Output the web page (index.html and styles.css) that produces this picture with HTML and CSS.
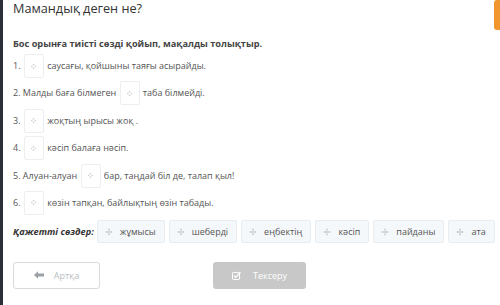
FILE: index.html
```html
<!DOCTYPE html>
<html>
<head>
<meta charset="utf-8">
<link rel="stylesheet" href="styles.css">
</head>
<body>
<div class="page">
  <div class="accent"></div>
  <h1 class="title">Мамандық деген не?</h1>
  <p class="instr">Бос орынға тиісті сөзді қойып, мақалды толықтыр.</p>
  <div class="rows">
    <div class="row">1. <span class="slot"><svg viewBox="0 0 10 10"><path d="M5 1 L6.6 3.2 H3.4 Z M5 9 L6.6 6.8 H3.4 Z M1 5 L3.2 3.4 V6.6 Z M9 5 L6.8 3.4 V6.6 Z"/></svg></span> саусағы, қойшыны таяғы асырайды.</div>
    <div class="row">2. Малды бағa білмеген <span class="slot"><svg viewBox="0 0 10 10"><path d="M5 1 L6.6 3.2 H3.4 Z M5 9 L6.6 6.8 H3.4 Z M1 5 L3.2 3.4 V6.6 Z M9 5 L6.8 3.4 V6.6 Z"/></svg></span> таба білмейді.</div>
    <div class="row">3. <span class="slot"><svg viewBox="0 0 10 10"><path d="M5 1 L6.6 3.2 H3.4 Z M5 9 L6.6 6.8 H3.4 Z M1 5 L3.2 3.4 V6.6 Z M9 5 L6.8 3.4 V6.6 Z"/></svg></span> жоқтың ырысы жоқ .</div>
    <div class="row">4. <span class="slot"><svg viewBox="0 0 10 10"><path d="M5 1 L6.6 3.2 H3.4 Z M5 9 L6.6 6.8 H3.4 Z M1 5 L3.2 3.4 V6.6 Z M9 5 L6.8 3.4 V6.6 Z"/></svg></span> кәсіп балаға нәсіп.</div>
    <div class="row">5. Алуан-алуан <span class="slot"><svg viewBox="0 0 10 10"><path d="M5 1 L6.6 3.2 H3.4 Z M5 9 L6.6 6.8 H3.4 Z M1 5 L3.2 3.4 V6.6 Z M9 5 L6.8 3.4 V6.6 Z"/></svg></span> бар, таңдай біл де, талап қыл!</div>
    <div class="row">6. <span class="slot"><svg viewBox="0 0 10 10"><path d="M5 1 L6.6 3.2 H3.4 Z M5 9 L6.6 6.8 H3.4 Z M1 5 L3.2 3.4 V6.6 Z M9 5 L6.8 3.4 V6.6 Z"/></svg></span> көзін тапқан, байлықтың өзін табады.</div>
  </div>
  <div class="words">
    <span class="label">Қажетті сөздер:</span>
    <span class="chip"><svg class="move" viewBox="0 0 10 10"><path d="M5 0.5 L6.5 2.3 H5.5 V4.5 H7.7 V3.5 L9.5 5 L7.7 6.5 V5.5 H5.5 V7.7 H6.5 L5 9.5 L3.5 7.7 H4.5 V5.5 H2.3 V6.5 L0.5 5 L2.3 3.5 V4.5 H4.5 V2.3 H3.5 Z"/></svg>жұмысы</span>
    <span class="chip"><svg class="move" viewBox="0 0 10 10"><path d="M5 0.5 L6.5 2.3 H5.5 V4.5 H7.7 V3.5 L9.5 5 L7.7 6.5 V5.5 H5.5 V7.7 H6.5 L5 9.5 L3.5 7.7 H4.5 V5.5 H2.3 V6.5 L0.5 5 L2.3 3.5 V4.5 H4.5 V2.3 H3.5 Z"/></svg>шеберді</span>
    <span class="chip"><svg class="move" viewBox="0 0 10 10"><path d="M5 0.5 L6.5 2.3 H5.5 V4.5 H7.7 V3.5 L9.5 5 L7.7 6.5 V5.5 H5.5 V7.7 H6.5 L5 9.5 L3.5 7.7 H4.5 V5.5 H2.3 V6.5 L0.5 5 L2.3 3.5 V4.5 H4.5 V2.3 H3.5 Z"/></svg>еңбектің</span>
    <span class="chip"><svg class="move" viewBox="0 0 10 10"><path d="M5 0.5 L6.5 2.3 H5.5 V4.5 H7.7 V3.5 L9.5 5 L7.7 6.5 V5.5 H5.5 V7.7 H6.5 L5 9.5 L3.5 7.7 H4.5 V5.5 H2.3 V6.5 L0.5 5 L2.3 3.5 V4.5 H4.5 V2.3 H3.5 Z"/></svg>кәсіп</span>
    <span class="chip"><svg class="move" viewBox="0 0 10 10"><path d="M5 0.5 L6.5 2.3 H5.5 V4.5 H7.7 V3.5 L9.5 5 L7.7 6.5 V5.5 H5.5 V7.7 H6.5 L5 9.5 L3.5 7.7 H4.5 V5.5 H2.3 V6.5 L0.5 5 L2.3 3.5 V4.5 H4.5 V2.3 H3.5 Z"/></svg>пайданы</span>
    <span class="chip"><svg class="move" viewBox="0 0 10 10"><path d="M5 0.5 L6.5 2.3 H5.5 V4.5 H7.7 V3.5 L9.5 5 L7.7 6.5 V5.5 H5.5 V7.7 H6.5 L5 9.5 L3.5 7.7 H4.5 V5.5 H2.3 V6.5 L0.5 5 L2.3 3.5 V4.5 H4.5 V2.3 H3.5 Z"/></svg>ата</span>
  </div>
  <div class="buttons">
    <span class="btn back"><svg class="arrow" viewBox="0 0 10 8"><path d="M0 4 L4 0.3 V2.6 H10 V5.4 H4 V7.7 Z"/></svg>Артқа</span>
    <span class="btn check"><svg class="box" viewBox="0 0 10 10"><rect x="0.6" y="1.6" width="7.8" height="7.8" rx="0.8" fill="none" stroke="#fff" stroke-width="1.1"/><path d="M2.3 5.2 L4.2 7.1 L9.4 1.2" fill="none" stroke="#fff" stroke-width="1.4"/></svg>Тексеру</span>
  </div>
</div>
</body>
</html>
```
FILE: styles.css
```css
html, body { margin: 0; padding: 0; background: #fff; }
body { font-family: "Open Sans", "Liberation Sans", sans-serif; color: #555; }
.page {
  position: relative;
  height: 305px;
  box-sizing: border-box;
  border-left: 3px solid #2b3036;
  padding: 0 0 0 10px;
  overflow: hidden;
}
.accent {
  position: absolute; right: -3px; top: 0; width: 9px; height: 30px;
  background: #f0962d; border-radius: 3px;
}
.title {
  margin: -1px 0 0 0; font-size: 12.7px; font-weight: 400; color: #333; line-height: 18px;
}
.instr { margin: 20px 0 0 0; font-size: 9.2px; font-weight: 700; color: #444; line-height: 14px; }
.rows { display: flex; flex-direction: column; gap: 3.4px; margin-top: 3px; }
.row { display: flex; align-items: center; font-size: 9px; line-height: 24px; height: 24px; white-space: pre; color: #555; }
.slot {
  display: inline-flex; align-items: center; justify-content: center;
  width: 18px; height: 22px; border: 1px solid #eceff2; border-radius: 2px; margin: 0 1px;
  background: #fff;
}
.slot svg { width: 7px; height: 7px; fill: #c4c8cc; }
.words { display: flex; align-items: center; gap: 4px; margin-top: 5.5px; white-space: nowrap; }
.label { font-weight: 700; font-style: italic; font-size: 9.2px; color: #333; margin-right: -1px; flex-shrink: 0; }
.chip {
  display: inline-flex; align-items: center; height: 21px; padding: 0 8px 0 7px;
  background: #f5f8fa; border: 1px solid #e8edf1; border-radius: 2px; font-size: 9px; color: #555;
  flex-shrink: 0;
}
.move { width: 8px; height: 8px; fill: #bcc6cc; margin-right: 7px; }
.buttons { display: flex; gap: 113px; margin-top: 18.5px; }
.btn {
  display: inline-flex; align-items: center; justify-content: center; height: 27px;
  box-sizing: border-box; border-radius: 3px; font-size: 9px;
}
.back { width: 87px; border: 1px solid #d8dadc; color: #b8bcc0; background: #fff; }
.arrow { width: 10px; height: 8px; fill: #9aa0a6; margin-right: 10px; }
.check { width: 93px; background: #c8c8c8; color: #fff; }
.box { width: 9px; height: 9px; margin-right: 12px; }
```
